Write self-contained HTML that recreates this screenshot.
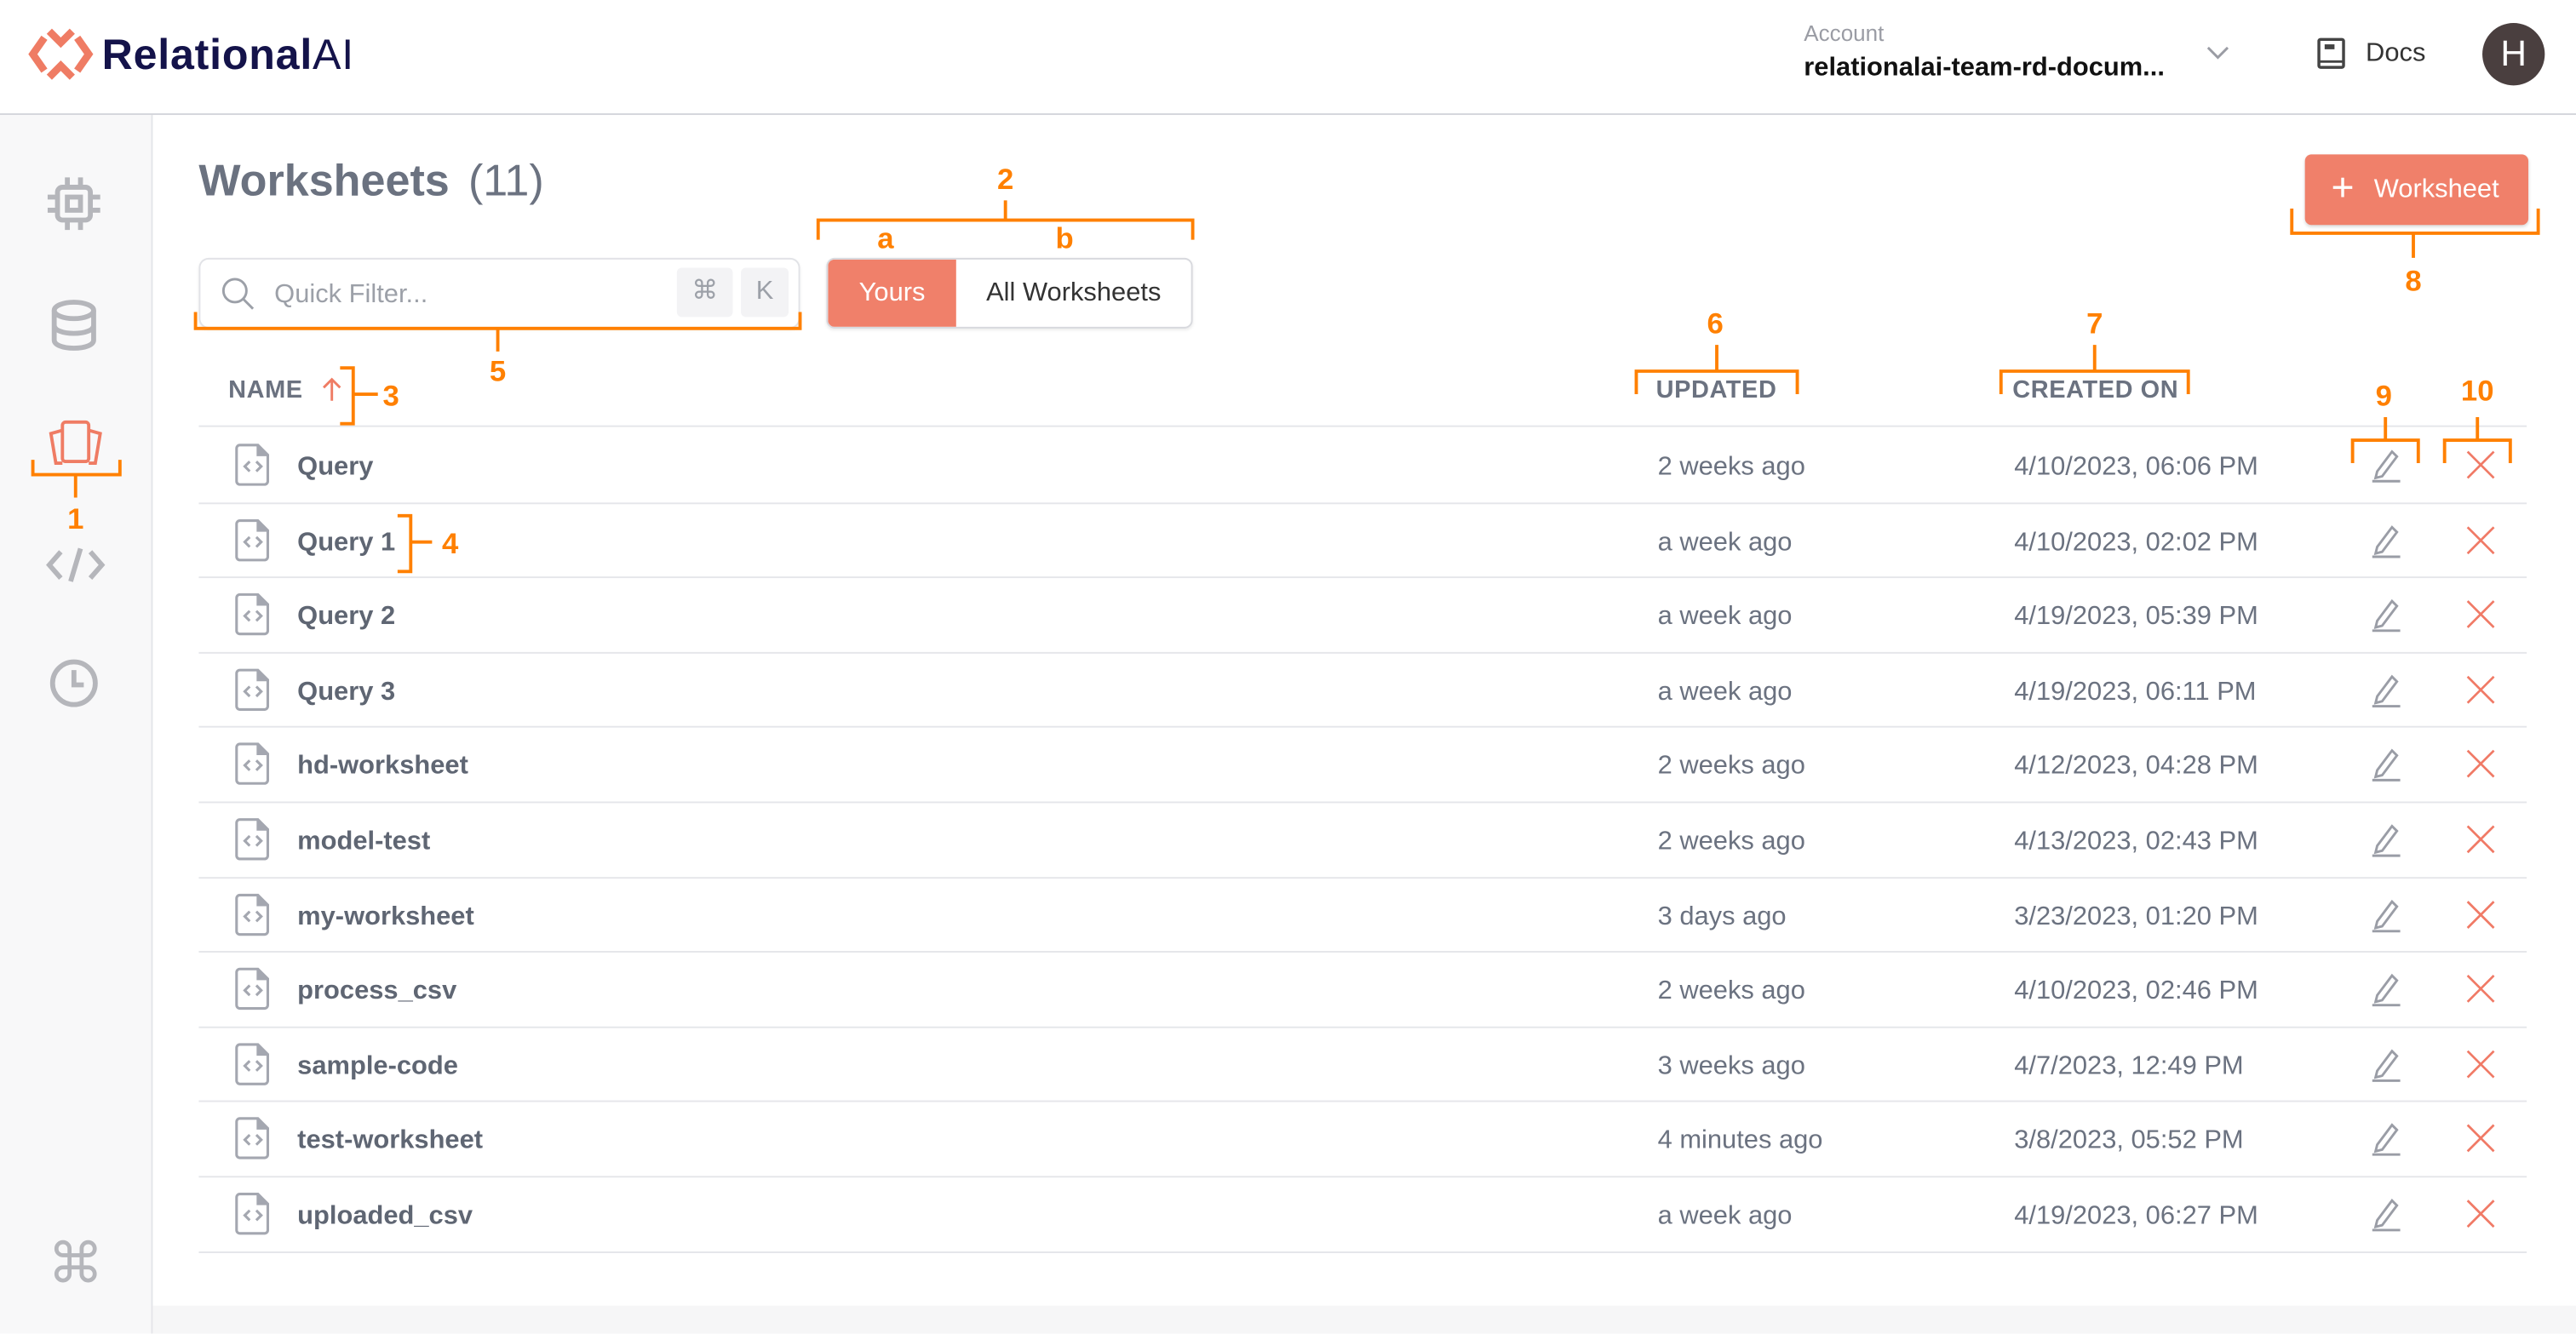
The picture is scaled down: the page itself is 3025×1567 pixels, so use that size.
<!DOCTYPE html>
<html><head><meta charset="utf-8"><style>
html,body{margin:0;padding:0;width:3025px;height:1565px;overflow:hidden;background:#fff;}
#w{position:absolute;left:0;top:0;width:1568px;height:811.2px;transform:scale(1.92921);transform-origin:0 0;font-family:"Liberation Sans",Arial,sans-serif;color:#6b7280;}
.a{position:absolute;white-space:nowrap;}
.row{position:absolute;left:121px;width:1417px;height:45.6px;border-bottom:1px solid #e5e6ea;}
.row .n{position:absolute;left:60px;top:16px;font-size:16px;font-weight:bold;color:#5f6673;}
.row .u{position:absolute;left:888px;top:16px;font-size:16px;color:#6b7280;}
.row .c{position:absolute;left:1105px;top:16px;font-size:16px;color:#6b7280;}
.row svg{position:absolute;}
.h{position:absolute;top:229px;font-size:15px;font-weight:bold;color:#6b7280;letter-spacing:.3px;}
</style></head><body><div id="w">
<!-- header -->
<div class="a" style="left:0;top:0;width:1568px;height:69px;border-bottom:1px solid #d4d5db;background:#fff"></div>
<svg class="a" style="left:17px;top:17px" width="40" height="32" viewBox="0 0 40 32">
<g fill="none" stroke="#ef7c64" stroke-width="4.5">
<path d="M10 6 L3 16 L10 26"/><path d="M30 6 L37 16 L30 26"/>
<path d="M13 2 L20 9 L27 2"/><path d="M13 30 L20 23 L27 30"/></g></svg>
<div class="a" style="left:62px;top:18px;font-size:26px;font-weight:bold;color:#14134a;letter-spacing:0.4px">Relational<span style="font-weight:normal">AI</span></div>
<div class="a" style="left:1098px;top:13px;font-size:13.5px;color:#9a9ca4">Account</div>
<div class="a" style="left:1098px;top:33px;font-size:16px;font-weight:bold;color:#111">relationalai-team-rd-docum...</div>
<svg class="a" style="left:1343px;top:27px" width="14" height="10"><path d="M1 2 L7 8 L13 2" fill="none" stroke="#9a9ca4" stroke-width="1.5"/></svg>
<svg class="a" style="left:1410px;top:23px" width="18" height="20"><rect x="1.5" y="1" width="15" height="17" rx="1" fill="none" stroke="#444" stroke-width="1.8"/><rect x="5" y="4" width="6" height="3" fill="#444"/><line x1="1.5" y1="14.5" x2="16.5" y2="14.5" stroke="#444" stroke-width="1.5"/></svg>
<div class="a" style="left:1440px;top:24px;font-size:16px;color:#333">Docs</div>
<div class="a" style="left:1511px;top:14px;width:38px;height:38px;border-radius:50%;background:#4a3f3f;color:#fff;font-size:22px;text-align:center;line-height:38px">H</div>
<!-- sidebar -->
<div class="a" style="left:0;top:70px;width:92px;height:742px;background:#f8f8f9;border-right:1px solid #e4e5e9"></div>
<svg class="a" style="left:27px;top:106px" width="36" height="36" viewBox="0 0 36 36" fill="none" stroke="#b5b6bb" stroke-width="3"><rect x="8" y="8" width="20" height="20" rx="3"/><rect x="14" y="14" width="8" height="8"/><path d="M14 2v6M22 2v6M14 28v6M22 28v6M2 14h6M2 22h6M28 14h6M28 22h6"/></svg>
<svg class="a" style="left:30px;top:182px" width="30" height="32" viewBox="0 0 30 32" fill="none" stroke="#b5b6bb" stroke-width="3"><ellipse cx="15" cy="7" rx="12" ry="5"/><path d="M3 7v18c0 3 5 5 12 5s12-2 12-5V7M3 16c0 3 5 5 12 5s12-2 12-5"/></svg>
<svg class="a" style="left:27px;top:255px" width="38" height="30" viewBox="0 0 38 30" fill="none" stroke="#ef7c64" stroke-width="2"><rect x="11" y="2" width="16" height="24" rx="2"/><path d="M11 7 L4 9 L7 27 L11 27M27 7 L34 9 L31 27 L27 27"/></svg>
<svg class="a" style="left:28px;top:332px" width="36" height="24" viewBox="0 0 36 24" fill="none" stroke="#b5b6bb" stroke-width="3"><path d="M9 4 L2 12 L9 20M27 4 L34 12 L27 20M21 2 L15 22"/></svg>
<svg class="a" style="left:29px;top:400px" width="32" height="32" viewBox="0 0 32 32" fill="none" stroke="#b5b6bb" stroke-width="3"><circle cx="16" cy="16" r="13"/><path d="M16 8v9h6"/></svg>
<div class="a" style="left:29px;top:750px;font-size:34px;color:#b5b6bb">⌘</div>
<div class="a" style="left:93px;top:795px;width:1475px;height:17px;background:#f6f6f7"></div>
<!-- title -->
<div class="a" style="left:121px;top:95px;font-size:27px;font-weight:bold;color:#6b7280">Worksheets <span style="font-weight:normal;margin-left:4px">(11)</span></div>
<div class="a" style="left:1403px;top:94px;width:136px;height:43px;border-radius:4px;background:#f0806a;color:#fff;font-size:16px;line-height:43px;box-shadow:0 1px 2px rgba(0,0,0,.15)"><span style="font-size:24px;position:absolute;left:16px;top:-1px;font-weight:300">+</span><span style="position:absolute;left:42px">Worksheet</span></div>
<!-- search -->
<div class="a" style="left:121px;top:157px;width:364px;height:41px;border:1px solid #e2e3e7;border-radius:6px;background:#fff;box-shadow:0 1px 2px rgba(0,0,0,.05)"></div>
<svg class="a" style="left:134px;top:168px" width="22" height="22" fill="none" stroke="#9ca0a8" stroke-width="1.5"><circle cx="9" cy="9" r="7"/><path d="M14 14 L20 20"/></svg>
<div class="a" style="left:167px;top:171px;font-size:16px;color:#9ca0a8">Quick Filter...</div>
<div class="a" style="left:412px;top:163px;width:34px;height:30px;background:#f3f3f5;border-radius:3px;text-align:center;line-height:30px;color:#9ca0a8;font-size:16px">⌘</div>
<div class="a" style="left:451px;top:163px;width:29px;height:30px;background:#f3f3f5;border-radius:3px;text-align:center;line-height:30px;color:#9ca0a8;font-size:16px">K</div>
<!-- toggle -->
<div class="a" style="left:503px;top:157px;width:221px;height:41px;border:1px solid #d8d9de;border-radius:5px;background:#fff;overflow:hidden;box-shadow:0 1px 2px rgba(0,0,0,.08)">
<div class="a" style="left:0;top:0;width:78px;height:41px;background:#f0806a;color:#fff;font-size:16px;text-align:center;line-height:41px">Yours</div>
<div class="a" style="left:78px;top:0;width:143px;height:41px;color:#333;font-size:16px;text-align:center;line-height:41px">All Worksheets</div></div>
<!-- headers -->
<div class="h" style="left:139px">NAME</div>
<svg class="a" style="left:196px;top:229px" width="12" height="16" fill="none" stroke="#ef7c64" stroke-width="1.5"><path d="M6 15V2M1 7l5-5 5 5"/></svg>
<div class="h" style="left:1008px">UPDATED</div>
<div class="h" style="left:1225px">CREATED ON</div>
<div class="a" style="left:121px;top:259px;width:1417px;border-top:1px solid #e5e6ea"></div>
<div id="rows"></div>
<!-- annotations -->
<svg class="a" style="left:0;top:0" width="1568" height="811" viewBox="0 0 1568 811" fill="none" stroke="#ff8000" stroke-width="2">
<path d="M20 280v9h53v-9M46 289v14"/>
<path d="M498 146v-12h228v12M612 134v-12"/>
<path d="M207 224h8v34h-8M215 240h15"/>
<path d="M242 314h8v34h-8M250 330h13"/>
<path d="M119 190v10h368v-10M303 200v14"/>
<path d="M996 240v-14h98v14M1045 226v-16"/>
<path d="M1218 240v-14h114v14M1275 226v-16"/>
<path d="M1395 127v15h150v-15M1469 142v15"/>
<path d="M1432 282v-14h40v14M1452 268v-14"/>
<path d="M1488 282v-14h40v14M1508 268v-14"/>
<g fill="#ff8000" stroke="none" font-family="Liberation Sans,Arial,sans-serif" font-weight="bold" font-size="18" text-anchor="middle">
<text x="46" y="322">1</text><text x="612" y="115">2</text><text x="539" y="151">a</text><text x="648" y="151">b</text>
<text x="238" y="247">3</text><text x="274" y="337">4</text><text x="303" y="232">5</text><text x="1044" y="203">6</text>
<text x="1275" y="203">7</text><text x="1469" y="177">8</text><text x="1451" y="247">9</text><text x="1508" y="244">10</text></g>
</svg>
</div>
<script>
var d=[["Query","2 weeks ago","4/10/2023, 06:06 PM"],["Query 1","a week ago","4/10/2023, 02:02 PM"],["Query 2","a week ago","4/19/2023, 05:39 PM"],["Query 3","a week ago","4/19/2023, 06:11 PM"],["hd-worksheet","2 weeks ago","4/12/2023, 04:28 PM"],["model-test","2 weeks ago","4/13/2023, 02:43 PM"],["my-worksheet","3 days ago","3/23/2023, 01:20 PM"],["process_csv","2 weeks ago","4/10/2023, 02:46 PM"],["sample-code","3 weeks ago","4/7/2023, 12:49 PM"],["test-worksheet","4 minutes ago","3/8/2023, 05:52 PM"],["uploaded_csv","a week ago","4/19/2023, 06:27 PM"]];
var h="";d.forEach(function(r,i){var t=260+i*45.6;
h+='<div class="row" style="top:'+t+'px"><svg style="left:22px;top:10px" width="22" height="26" viewBox="0 0 22 26" fill="none" stroke="#a4a7b0" stroke-width="1.6"><path d="M3 1h11l6 6v16a2 2 0 0 1-2 2H3a2 2 0 0 1-2-2V3a2 2 0 0 1 2-2z"/><path d="M14 1v6h6" fill="#a4a7b0"/><path d="M9 11l-3 3 3 3M13 11l3 3-3 3"/></svg><div class="n">'+r[0]+'</div><div class="u">'+r[1]+'</div><div class="c">'+r[2]+'</div><svg style="left:1321px;top:12px" width="20" height="22" fill="none" stroke="#9a9da6" stroke-width="1.5"><path d="M5 15 L14 3 L17 6 L8 18 L4 19 Z"/><path d="M2 21h17"/></svg><svg style="left:1380px;top:14px" width="18" height="18" fill="none" stroke="#f07a66" stroke-width="1.4"><path d="M1 1L17 17M17 1L1 17"/></svg></div>';});
document.getElementById("rows").innerHTML=h;
</script>
</body></html>
